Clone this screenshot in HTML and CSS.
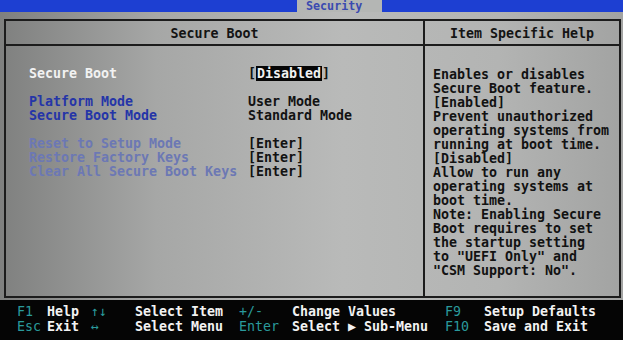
FILE: index.html
```html
<!DOCTYPE html>
<html lang="en">
<head>
<meta charset="UTF-8">
<meta name="viewport" content="width=device-width, initial-scale=1.0">
<title>Security - Secure Boot</title>
<link rel="stylesheet" href="styles.css">
</head>
<body>

<div class="menuBar">
  <span class="tab">Security</span>
</div>

<div class="screen">
  <div class="frame">
    <div class="head">Secure Boot</div>
    <div class="head headHelp">Item Specific Help</div>

    <div class="settings">
      <div class="row"><span class="label active">Secure Boot</span><span class="value">[<span class="selected">Disabled</span>]</span></div>
      <div class="row"></div>
      <div class="row"><span class="label info">Platform Mode</span><span class="value">User Mode</span></div>
      <div class="row"><span class="label info">Secure Boot Mode</span><span class="value">Standard Mode</span></div>
      <div class="row"></div>
      <div class="row"><span class="label dim">Reset to Setup Mode</span><span class="value">[Enter]</span></div>
      <div class="row"><span class="label dim">Restore Factory Keys</span><span class="value">[Enter]</span></div>
      <div class="row"><span class="label dim">Clear All Secure Boot Keys</span><span class="value">[Enter]</span></div>
    </div>

    <div class="help">
      <p>Enables or disables</p>
      <p>Secure Boot feature.</p>
      <p>[Enabled]</p>
      <p>Prevent unauthorized</p>
      <p>operating systems from</p>
      <p>running at boot time.</p>
      <p>[Disabled]</p>
      <p>Allow to run any</p>
      <p>operating systems at</p>
      <p>boot time.</p>
      <p>Note: Enabling Secure</p>
      <p>Boot requires to set</p>
      <p>the startup setting</p>
      <p>to "UEFI Only" and</p>
      <p>"CSM Support: No".</p>
    </div>
  </div>
</div>

<div class="keys">
  <span class="key">F1</span><span>Help</span>
  <span class="key">&#8593;&#8595;</span><span>Select Item</span>
  <span class="key">+/-</span><span>Change Values</span>
  <span class="key">F9</span><span>Setup Defaults</span>

  <span class="key">Esc</span><span>Exit</span>
  <span class="key">&#8596;</span><span>Select Menu</span>
  <span class="key">Enter</span><span>Select &#9654; Sub-Menu</span>
  <span class="key">F10</span><span>Save and Exit</span>
</div>

</body>
</html>
```

FILE: styles.css
```css
html, body {
  margin: 0;
  padding: 0;
}
body {
  width: 623px;
  height: 340px;
  overflow: hidden;
  font-family: "DejaVu Sans Mono", "Liberation Mono", monospace;
  font-size: 13.3px;
  font-weight: bold;
  background-color: #050505;
  color: #111;
}
.menuBar {
  height: 12px;
  background-color: #1d3fd2;
  display: flex;
  justify-content: center;
  padding-left: 56px;
}
.tab {
  width: 85px;
  height: 12px;
  box-sizing: border-box;
  padding-left: 9px;
  background-color: #b4b6b4;
  color: #3a4ab0;
  font-size: 11.7px;
  line-height: 12px;
}
.screen {
  height: 288px;
  padding: 7px 2px 0 4px;
  box-sizing: border-box;
  background: linear-gradient(to right, #7f807f 0%, #a6a7a6 25%, #b9bab9 55%, #b3b4b3 80%, #a2a3a2 100%);
}
.frame {
  height: 279px;
  box-sizing: border-box;
  border: 2px solid #1c1c1c;
  display: grid;
  grid-template-columns: 417px 1fr;
  grid-template-rows: 25px 1fr;
}
.head {
  border-bottom: 2px solid #1c1c1c;
  text-align: center;
  line-height: 26px;
  color: #141414;
}
.headHelp,
.help {
  border-left: 2px solid #1c1c1c;
}
.settings {
  padding: 21px 0 0 23px;
}
.row {
  display: flex;
  height: 14px;
  line-height: 14px;
}
.label {
  width: 219px;
  flex-shrink: 0;
}
.label.active {
  color: #f2f2f2;
}
.label.info {
  color: #2535a8;
}
.label.dim {
  color: #6c78b4;
}
.value {
  color: #121212;
}
.selected {
  background-color: #060606;
  color: #f0f0f0;
  padding: 0 1px;
}
.help {
  padding: 22px 0 0 8px;
}
.help p {
  margin: 0;
  height: 14px;
  line-height: 14px;
  white-space: pre;
  color: #121212;
}
.keys {
  height: 40px;
  box-sizing: border-box;
  padding: 4px 0 0 17px;
  display: grid;
  grid-template-columns: 30px 44px 44px 104px 53px 153px 39px 1fr;
  grid-auto-rows: 15px;
  line-height: 15px;
  color: #f2f2f2;
}
.keys .key {
  color: #2a9a9c;
  font-weight: normal;
}
```
